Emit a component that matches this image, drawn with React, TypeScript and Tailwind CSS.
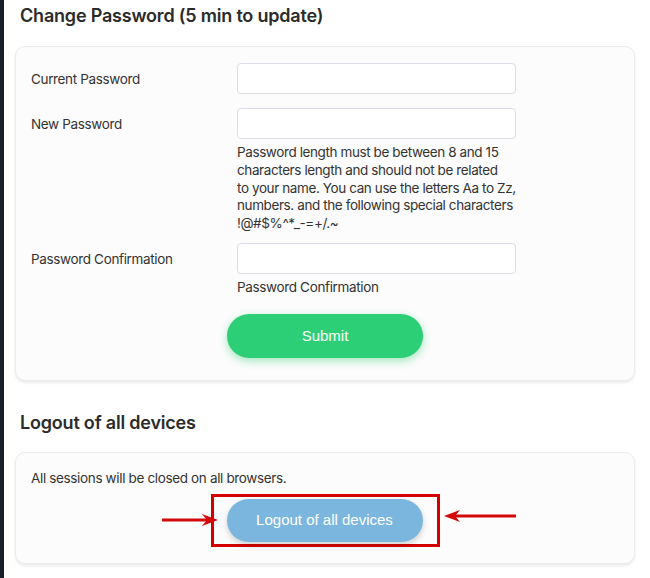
import React from 'react';

const font = { fontFamily: 'Inter, "Noto Sans", sans-serif' };

function Field(props: { label: string; help?: React.ReactNode }) {
  const { label, help } = props;
  return (
    <>
      <label className="pt-[6px] text-[13.5px] tracking-[-0.35px] text-[#333]">{label}</label>
      <div className="flex flex-col">
        <input className="h-[31px] w-[279px] rounded-[4px] border border-[#dddde6] bg-white" />
        {help}
      </div>
    </>
  );
}

function Arrow(props: { dir: 'left' | 'right'; className: string }) {
  const right = props.dir === 'right';
  return (
    <svg className={props.className} width={right ? 60 : 76} height="14" viewBox={right ? '0 0 60 14' : '0 0 76 14'}>
      {right ? (
        <>
          <line x1="0" y1="7" x2="50" y2="7" stroke="#d20a0a" strokeWidth="3" />
          <path d="M40 1 L56 7 L40 13 L45 7 Z" fill="#d20a0a" />
        </>
      ) : (
        <>
          <line x1="10" y1="7" x2="76" y2="7" stroke="#d20a0a" strokeWidth="3" />
          <path d="M20 1 L4 7 L20 13 L15 7 Z" fill="#d20a0a" />
        </>
      )}
    </svg>
  );
}

export default function App() {
  return (
    <div className="flex min-h-[578px] bg-[#1b1e2c]" style={font}>
      <div className="ml-[4px] flex-1 bg-white pb-[12px] pl-[11px] pr-[15px] pt-[4px]">
        <h2 className="pl-[5px] text-[18px] leading-[24px] font-semibold tracking-[-0.2px] text-[#2b2b2b]">
          Change Password (5 min to update)
        </h2>

        <div className="mt-[18px] rounded-[10px] border border-[#ebebeb] bg-[#fcfcfc] px-[15px] pb-[22px] pt-[16px] shadow-[0_2px_3px_rgba(0,0,0,0.08)]">
          <div className="grid grid-cols-[206px_1fr] gap-y-[14px]">
            <Field label="Current Password" />
            <Field
              label="New Password"
              help={
                <p className="mt-[5px] w-[290px] whitespace-nowrap text-[13.5px] leading-[17.8px] tracking-[-0.4px] text-[#333]">
                  Password length must be between 8 and 15
                  <br />
                  characters length and should not be related
                  <br />
                  to your name. You can use the letters Aa to Zz,
                  <br />
                  numbers. and the following special characters
                  <br />
                  !@#$%^*_-=+/.~
                </p>
              }
            />
          </div>
          <div className="mt-[10px] grid grid-cols-[206px_1fr]">
            <Field
              label="Password Confirmation"
              help={
                <p className="mt-[4px] text-[13.5px] leading-[18px] tracking-[-0.35px] text-[#333]">
                  Password Confirmation
                </p>
              }
            />
          </div>
          <div className="mt-[18px] flex justify-center">
            <button
              className="h-[44px] w-[196px] rounded-full bg-[#2dcf76] text-[15px] text-white shadow-[0_3px_8px_rgba(46,204,113,0.45)]"
              style={{ fontFamily: '"Liberation Sans", Arial, sans-serif' }}
            >
              Submit
            </button>
          </div>
        </div>

        <h2 className="mt-[30px] pl-[5px] text-[18px] leading-[24px] font-semibold tracking-[-0.2px] text-[#2b2b2b]">
          Logout of all devices
        </h2>

        <div className="relative mt-[17px] rounded-[10px] border border-[#ebebeb] bg-[#fcfcfc] px-[15px] pb-[16px] pt-[16px] shadow-[0_2px_3px_rgba(0,0,0,0.08)]">
          <p className="text-[13.5px] leading-[18px] tracking-[-0.35px] text-[#333]">
            All sessions will be closed on all browsers.
          </p>
          <div className="mt-[7px] flex justify-center">
            <div className="border-[3px] border-[#d40000] py-[2px] pl-[13px] pr-[14px]">
              <button
                className="h-[43px] w-[196px] rounded-full bg-[#7ab6dd] text-[15px] text-white shadow-[0_3px_6px_rgba(0,0,0,0.18)]"
                style={{ fontFamily: '"Liberation Sans", Arial, sans-serif' }}
              >
                Logout of all devices
              </button>
            </div>
          </div>
          <Arrow dir="right" className="absolute left-[146px] top-[60px]" />
          <Arrow dir="left" className="absolute left-[424px] top-[56px]" />
        </div>
      </div>
    </div>
  );
}
